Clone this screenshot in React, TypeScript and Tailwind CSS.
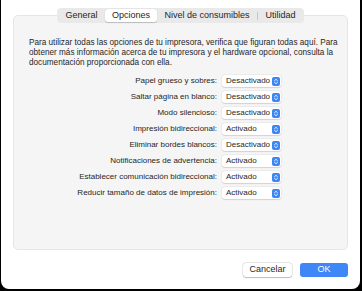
import React from "react";

const rows: [string, string][] = [
  ["Papel grueso y sobres:", "Desactivado"],
  ["Saltar página en blanco:", "Desactivado"],
  ["Modo silencioso:", "Desactivado"],
  ["Impresión bidireccional:", "Activado"],
  ["Eliminar bordes blancos:", "Desactivado"],
  ["Notificaciones de advertencia:", "Activado"],
  ["Establecer comunicación bidireccional:", "Activado"],
  ["Reducir tamaño de datos de impresión:", "Activado"],
];

function Popup({ value }: { value: string }) {
  return (
    <div className="flex h-[12px] w-[59px] items-center justify-between rounded-[3px] bg-white pl-[4px] pr-[1px] shadow-[0_0_0_0.5px_rgba(0,0,0,0.06),0_0.5px_1px_rgba(0,0,0,0.12)]">
      <span className="leading-none">{value}</span>
      <span className="flex h-[9px] w-[8px] items-center justify-center rounded-[2px] bg-[#3d86f5]">
        <svg width="6" height="7" viewBox="0 0 6 7" fill="none">
          <path d="M1.6 2.6 L3 1.3 L4.4 2.6" stroke="white" strokeWidth="0.9" strokeLinecap="round" strokeLinejoin="round" />
          <path d="M1.6 4.4 L3 5.7 L4.4 4.4" stroke="white" strokeWidth="0.9" strokeLinecap="round" strokeLinejoin="round" />
        </svg>
      </span>
    </div>
  );
}

export default function App() {
  return (
    <div className="h-[291px] w-[362px] overflow-hidden bg-black" style={{ fontFamily: "'Liberation Sans', Arial, sans-serif" }}>
      <div className="ml-[1px] mr-[2px] flex h-[289px] flex-col rounded-b-[8px] bg-white px-[12px] pt-[8px] text-[#262626]">
        <div className="relative z-10 mx-auto flex h-[15px] w-[247px] items-center rounded-[4px] bg-[#e9e9e9] px-[1px] text-[9px]">
          <div className="flex h-[13px] w-[47px] items-center justify-center">General</div>
          <div className="flex h-[13px] w-[52px] items-center justify-center rounded-[3px] bg-white shadow-[0_0.5px_1px_rgba(0,0,0,0.2)]">Opciones</div>
          <div className="flex h-[13px] w-[100px] items-center justify-center">Nivel de consumibles</div>
          <div className="h-[8px] w-px bg-[#c8c8c8]" />
          <div className="flex h-[13px] flex-1 items-center justify-center">Utilidad</div>
        </div>
        <div className="-mt-[8px] flex h-[235px] flex-col rounded-[5px] border border-[#e6e6e6] bg-[#f5f5f5] pl-[15px] pr-[3px] pt-[22px] text-[8px]">
          <p className="text-[8.2px] leading-[10px]">
            Para utilizar todas las opciones de tu impresora, verifica que figuran todas aquí. Para obtener más información acerca de tu impresora y el hardware opcional, consulta la documentación proporcionada con ella.
          </p>
          <div className="mt-[5px] flex flex-col">
            {rows.map(([label, value]) => (
              <div key={label} className="flex h-[16px] items-center">
                <div className="w-[188px] text-right">{label}</div>
                <div className="ml-[5px]">
                  <Popup value={value} />
                </div>
              </div>
            ))}
          </div>
        </div>
        <div className="mt-[13px] flex justify-end gap-[8px] text-[9px]">
          <button className="flex h-[14px] w-[49px] items-center justify-center rounded-[3px] bg-white text-[#262626] shadow-[0_0_0_0.5px_rgba(0,0,0,0.15),0_0.5px_1px_rgba(0,0,0,0.2)]">
            Cancelar
          </button>
          <button className="flex h-[14px] w-[48px] items-center justify-center rounded-[3px] bg-[#3f86f6] text-white">
            OK
          </button>
        </div>
      </div>
    </div>
  );
}
